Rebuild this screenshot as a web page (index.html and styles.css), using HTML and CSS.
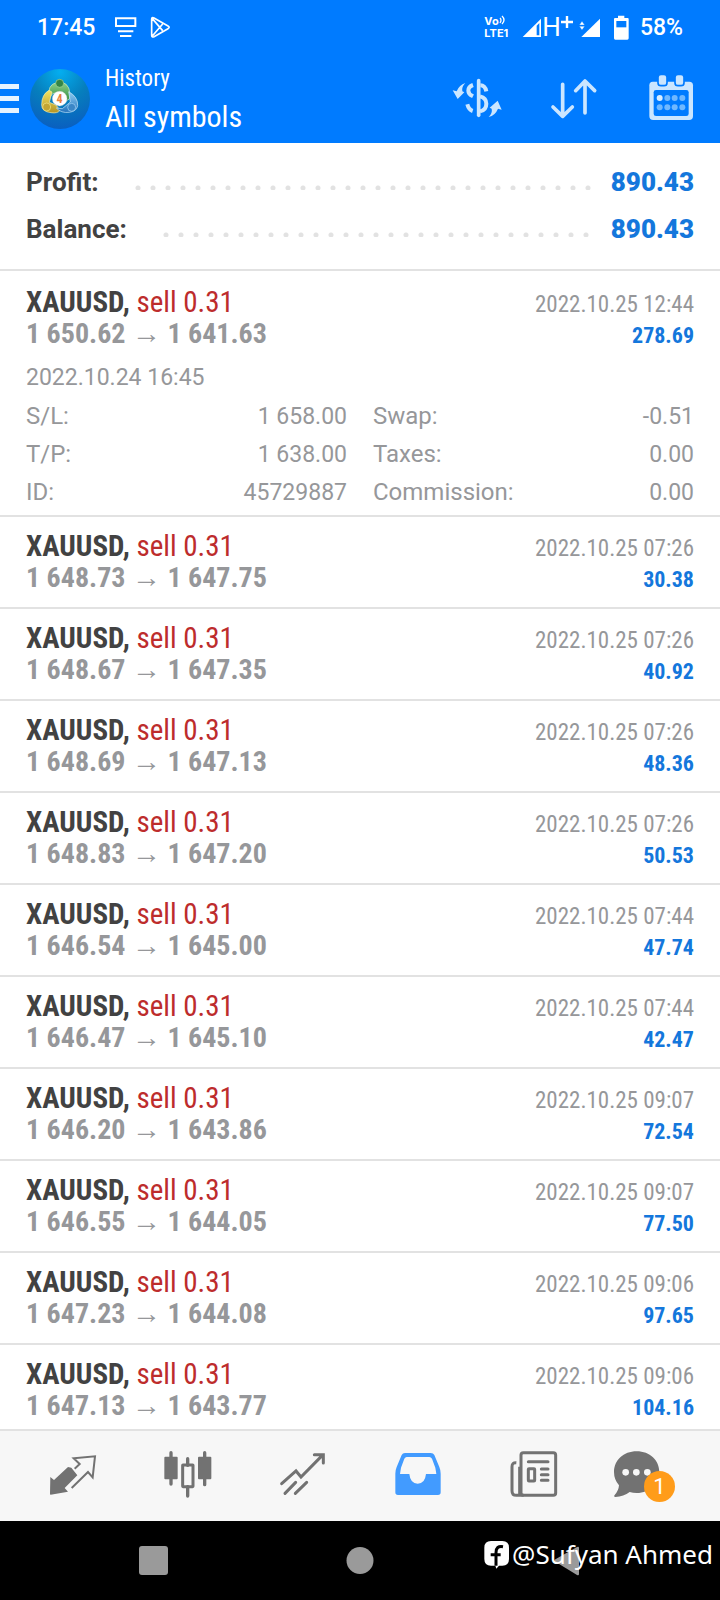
FILE: index.html
```html
<!DOCTYPE html>
<html lang="en">
<head>
<meta charset="utf-8">
<meta name="viewport" content="width=device-width, initial-scale=1">
<title>History - All symbols</title>
<link rel="stylesheet" href="styles.css">
</head>
<body>
<div class="screen">
  <header class="top">
    <div class="status">
      <span class="clock">17:45</span>
      <svg class="status-note" viewBox="342 45 69 69" aria-hidden="true"><path d="M348 52h58v23h-58z" fill="none" stroke="#fff" stroke-width="6"/><path d="M354 91h46M360 105h34" stroke="#fff" stroke-width="6"/></svg>
      <svg class="status-note" viewBox="447 45 69 69" aria-hidden="true"><path d="M455 55q0-7 7-4l42 24q7 4 0 8l-42 24q-7 3-7-4zM457 53l31 36M457 105l31-36M455 79" fill="none" stroke="#fff" stroke-width="5" stroke-linejoin="round"/></svg>
      <span class="spacer"></span>
      <span class="volte"><span>Vo<svg viewBox="0 0 8 10" aria-hidden="true"><path d="M1 3q2 2 0 5M3 1q4 4 0 8" fill="none" stroke="#fff" stroke-width="1.3"/></svg></span><span>LTE1</span></span>
      <svg class="signal-one" viewBox="255 45 60 69" aria-hidden="true"><path d="M257 108L312 53v55z" fill="#fff"/><path d="M299 74l8-8v37h-8z" fill="#007bff"/></svg>
      <span class="hplus">H<svg viewBox="0 0 13 13" aria-hidden="true"><path d="M6.500 0v13M0 6.500h13" stroke="#fff" stroke-width="2.600"/></svg></span>
      <svg class="signal-two" viewBox="420 45 66 69" aria-hidden="true"><path d="M427 108L483 53v55z" fill="#fff"/><path d="M421 72l8-11 8 11zM421 76l8 11 8-11z" fill="#fff" stroke="#007bff" stroke-width="1"/></svg>
      <svg class="battery" viewBox="520 40 48 75" aria-hidden="true"><path d="M535 42h19v7h10q3 0 3 3v58q0 4-4 4h-36q-4 0-4-4V52q0-3 3-3h9z" fill="#fff"/><path d="M530 58h30v19h-30z" fill="#007bff"/></svg>
      <span class="percent">58%</span>
    </div>
    <div class="appbar">
      <button class="menu" aria-label="Menu"><span></span><span></span><span></span></button>
      <svg class="logo" viewBox="91 204 180 180" aria-hidden="true">
        <defs>
          <radialGradient id="sky" cx=".5" cy=".05" r=".95"><stop offset="0" stop-color="#04aef0"/><stop offset=".5" stop-color="#067fbd"/><stop offset="1" stop-color="#0a5fc0"/></radialGradient>
          <linearGradient id="green" x1="0" y1="0" x2="0" y2="1"><stop offset="0" stop-color="#8ed08a"/><stop offset="1" stop-color="#2c8a3c"/></linearGradient>
          <linearGradient id="gold" x1="0" y1="0" x2="0" y2="1"><stop offset="0" stop-color="#f3e463"/><stop offset="1" stop-color="#b59424"/></linearGradient>
          <linearGradient id="blue" x1="0" y1="0" x2="0" y2="1"><stop offset="0" stop-color="#8fcdf2"/><stop offset="1" stop-color="#2373bd"/></linearGradient>
        </defs>
        <circle cx="181" cy="294" r="90" fill="url(#sky)"/>
        <path d="M148 292q-6-43 24-47 35-7 39 33l-2 16-14 8-22-28-14 4z" fill="url(#green)" stroke="#d4efc6" stroke-width="2"/>
        <path d="M148 268q-22 12-22 44 0 20 28 23 20 3 27-7l-12-16-20-8 8-31z" fill="url(#gold)" stroke="#f4efad" stroke-width="2"/>
        <path d="M207 272q28 15 27 42-3 17-25 20-25 3-39-13l18 2 24-20z" fill="url(#blue)" stroke="#cbe9fb" stroke-width="2"/>
        <circle cx="180" cy="247" r="12" fill="#338547" stroke="#a9d99d" stroke-width="2"/>
        <circle cx="141" cy="318" r="12" fill="#c2a534" stroke="#f4e889" stroke-width="2"/>
        <circle cx="216" cy="319" r="12" fill="#3b86c6" stroke="#a8dafa" stroke-width="2"/>
        <circle cx="180" cy="293" r="22" fill="#fff" stroke="#d5d5d5"/>
        <text class="logo-digit" x="180" y="306" text-anchor="middle">4</text>
      </svg>
      <h1 class="titles"><span class="section">History</span><span class="symbols">All symbols</span></h1>
      <div class="actions">
        <button aria-label="Currency"><svg viewBox="36 216 150 150"><path d="M116 239v104" stroke="#cbe6ff" stroke-width="11" stroke-linecap="round"/><path d="M99 252q-14 5-14 17 0 10 14 17M121 253q14 0 18 18M120 286q19 5 19 22 0 19-19 23M98 330q-12-4-16-20" fill="none" stroke="#cbe6ff" stroke-width="12"/><path d="M76 246q-12 12-9 25l6 3-20 20-15-26 12 3q8-20 26-25zM146 348q12-12 9-25l-6-3 24-21 12 27-11-3q-8 20-28 25z" fill="#cbe6ff"/></svg></button>
        <button aria-label="Sort"><svg viewBox="327 216 150 150"><path d="M368 250v95M339 318l29 28 29-28M435 336v-95M407 269l28-29 29 29" fill="none" stroke="#cbe6ff" stroke-width="11" stroke-linecap="round" stroke-linejoin="round"/></svg></button>
        <button aria-label="Calendar"><svg viewBox="618 216 150 150"><path d="M638 242h110q11 0 11 11v92q0 12-12 12H640q-12 0-12-12v-92q0-11 10-11z" fill="#cbe6ff"/><rect x="641" y="267" width="105" height="78" rx="7" fill="#007bff"/><g fill="#cbe6ff" stroke="#007bff" stroke-width="5"><rect x="654" y="220" width="27" height="34" rx="9"/><rect x="705" y="220" width="27" height="34" rx="9"/></g><g fill="#70b8ff"><circle cx="659" cy="291" r="9" fill="#d9edff"/><circle cx="682" cy="291" r="9"/><circle cx="704" cy="291" r="9"/><circle cx="727" cy="291" r="9"/><circle cx="659" cy="319" r="9"/><circle cx="682" cy="319" r="9"/><circle cx="704" cy="319" r="9"/><circle cx="727" cy="319" r="9"/></g></svg></button>
      </div>
    </div>
  </header>

  <section class="summary">
    <div class="total"><span>Profit:</span><i class="leader"></i><b>890.43</b></div>
    <div class="total"><span>Balance:</span><i class="leader"></i><b>890.43</b></div>
  </section>

  <main class="deals">
    <article class="deal open">
      <div class="line"><span class="pair">XAUUSD, <em>sell 0.31</em></span><time>2022.10.25 12:44</time></div>
      <div class="line"><span class="price">1 650.62 <i>→</i> 1 641.63</span><b>278.69</b></div>
      <div class="details">
        <p>2022.10.24 16:45</p>
        <dl>
          <div><dt>S/L:</dt><dd>1 658.00</dd></div><div><dt>Swap:</dt><dd>-0.51</dd></div>
          <div><dt>T/P:</dt><dd>1 638.00</dd></div><div><dt>Taxes:</dt><dd>0.00</dd></div>
          <div><dt>ID:</dt><dd>45729887</dd></div><div><dt>Commission:</dt><dd>0.00</dd></div>
        </dl>
      </div>
    </article>
    <article class="deal">
      <div class="line"><span class="pair">XAUUSD, <em>sell 0.31</em></span><time>2022.10.25 07:26</time></div>
      <div class="line"><span class="price">1 648.73 <i>→</i> 1 647.75</span><b>30.38</b></div>
    </article>
    <article class="deal">
      <div class="line"><span class="pair">XAUUSD, <em>sell 0.31</em></span><time>2022.10.25 07:26</time></div>
      <div class="line"><span class="price">1 648.67 <i>→</i> 1 647.35</span><b>40.92</b></div>
    </article>
    <article class="deal">
      <div class="line"><span class="pair">XAUUSD, <em>sell 0.31</em></span><time>2022.10.25 07:26</time></div>
      <div class="line"><span class="price">1 648.69 <i>→</i> 1 647.13</span><b>48.36</b></div>
    </article>
    <article class="deal">
      <div class="line"><span class="pair">XAUUSD, <em>sell 0.31</em></span><time>2022.10.25 07:26</time></div>
      <div class="line"><span class="price">1 648.83 <i>→</i> 1 647.20</span><b>50.53</b></div>
    </article>
    <article class="deal">
      <div class="line"><span class="pair">XAUUSD, <em>sell 0.31</em></span><time>2022.10.25 07:44</time></div>
      <div class="line"><span class="price">1 646.54 <i>→</i> 1 645.00</span><b>47.74</b></div>
    </article>
    <article class="deal">
      <div class="line"><span class="pair">XAUUSD, <em>sell 0.31</em></span><time>2022.10.25 07:44</time></div>
      <div class="line"><span class="price">1 646.47 <i>→</i> 1 645.10</span><b>42.47</b></div>
    </article>
    <article class="deal">
      <div class="line"><span class="pair">XAUUSD, <em>sell 0.31</em></span><time>2022.10.25 09:07</time></div>
      <div class="line"><span class="price">1 646.20 <i>→</i> 1 643.86</span><b>72.54</b></div>
    </article>
    <article class="deal">
      <div class="line"><span class="pair">XAUUSD, <em>sell 0.31</em></span><time>2022.10.25 09:07</time></div>
      <div class="line"><span class="price">1 646.55 <i>→</i> 1 644.05</span><b>77.50</b></div>
    </article>
    <article class="deal">
      <div class="line"><span class="pair">XAUUSD, <em>sell 0.31</em></span><time>2022.10.25 09:06</time></div>
      <div class="line"><span class="price">1 647.23 <i>→</i> 1 644.08</span><b>97.65</b></div>
    </article>
    <article class="deal">
      <div class="line"><span class="pair">XAUUSD, <em>sell 0.31</em></span><time>2022.10.25 09:06</time></div>
      <div class="line"><span class="price">1 647.13 <i>→</i> 1 643.77</span><b>104.16</b></div>
    </article>
  </main>

  <nav class="tabs">
    <button aria-label="Quotes"><svg viewBox="110 60 216 216"><path d="M150 171l11 9 42-39 10 2 18 23-38 38 10 11-52 9q-2 0-2-2z" fill="#727272"/><path d="M223 146l15-14-18-17 64-6-7 63-14-16-49 48" fill="none" stroke="#727272" stroke-width="6"/></svg></button>
    <button aria-label="Charts"><svg viewBox="455 60 216 216"><path d="M512 98v94M613 98v96M562 116v20M562 200v28" stroke="#727272" stroke-width="10" stroke-linecap="round"/><rect x="492" y="110" width="40" height="68" rx="3" fill="#727272"/><rect x="593" y="110" width="40" height="68" rx="3" fill="#727272"/><rect x="547" y="135" width="31" height="65" rx="1" fill="none" stroke="#727272" stroke-width="9"/></svg></button>
    <button aria-label="Trade"><svg viewBox="800 60 216 216"><path d="M844 191l43-38 15 18 64-65M942 104h27v25M854 220l32-33M885 220l34-33" fill="none" stroke="#727272" stroke-width="9" stroke-linecap="round"/></svg></button>
    <button aria-label="History" aria-current="page"><svg viewBox="65 60 216 216"><path d="M134 99h77q8 0 11 6l15 36q4 9 4 20v56q0 8-8 8H113q-8 0-8-8v-56q0-11 4-20l15-36q3-6 10-6z" fill="#429bff"/><path d="M139 111h68q5 0 8 5l10 27 3 19h-31q-3 29-25 29t-25-29h-28l3-19 10-27q3-5 7-5z" fill="#f7f7f7"/></svg></button>
    <button aria-label="News"><svg viewBox="410 60 216 216"><rect x="482" y="98" width="104" height="128" rx="7" fill="none" stroke="#727272" stroke-width="9"/><path d="M468 128q-13-1-13 12v72q0 14 13 14h22M478 140v88" fill="none" stroke="#727272" stroke-width="9"/><path d="M504 125h59M543 147h20M543 164h20M543 181h20" stroke="#727272" stroke-width="9" stroke-linecap="round"/><rect x="504" y="146" width="19" height="37" rx="2" fill="none" stroke="#727272" stroke-width="9"/></svg></button>
    <button class="chat" aria-label="Messages"><svg viewBox="755 60 216 216"><path d="M829 94c40 0 68 27 68 62s-28 63-68 63q-11 0-21-3-18 14-43 15-6-1-2-6 12-13 13-29-15-17-15-40c0-35 28-62 68-62z" fill="#727272"/><g fill="#f7f7f7"><circle cx="796" cy="157" r="10"/><circle cx="828" cy="157" r="10"/><circle cx="861" cy="157" r="10"/></g></svg><span class="badge">1</span></button>
  </nav>

  <footer class="system">
    <button aria-label="Recent apps"><svg viewBox="0 0 30 30"><rect x="1" y="0" width="29" height="29" rx="3" fill="#9a9a9a"/></svg></button>
    <button aria-label="Home"><svg viewBox="0 0 30 30"><circle cx="15" cy="14.500" r="13.500" fill="#9a9a9a"/></svg></button>
    <button aria-label="Back"><svg viewBox="0 0 30 30"><path d="M3 15.500Q2 14.500 3 13.500L25 1q2-1 2 1v26q0 2-2 1z" fill="#9a9a9a"/></svg></button>
    <div class="watermark"><svg viewBox="364 366 75 87" aria-hidden="true"><path d="M385 369h34q20 0 20 20v34q0 20-20 20h-10l-8 9-3-9h-13q-20 0-20-20v-34q0-20 20-20z" fill="#fff"/><path d="M421 386q-21-4-21 18v39M384 410h30" fill="none" stroke="#000" stroke-width="9"/></svg><span>@Sufyan Ahmed</span></div>
  </footer>
</div>
</body>
</html>
```
FILE: styles.css
```css
* { box-sizing: border-box; }

body {
  margin: 0;
  background: #fff;
  color: #424242;
  font-family: Roboto, "Liberation Sans", sans-serif;
  font-size: 24px;
}

button {
  padding: 0;
  border: 0;
  background: none;
  font: inherit;
  color: inherit;
}

svg { display: block; }

.screen {
  display: flex;
  flex-direction: column;
  height: 100vh;
}

.top {
  flex: none;
  background: #007bff;
  color: #fff;
}

.status {
  display: flex;
  align-items: center;
  height: 54px;
  padding: 0 37px;
  font-size: 23px;
  font-weight: 500;
}

.clock { margin-right: 19px; }

.status-note {
  width: 23px;
  height: 23px;
  margin-right: 12px;
}

.spacer { flex: 1; }

.volte {
  margin-right: 14px;
  font-family: Inter, sans-serif;
  font-size: 11px;
  font-weight: 700;
  line-height: 12px;
}

.volte > span { display: flex; }
.volte svg { width: 8px; height: 10px; }

.signal-one { width: 20px; height: 23px; }

.hplus {
  display: flex;
  align-items: flex-start;
  margin-right: 6px;
  font-size: 26px;
  font-weight: 400;
  line-height: 26px;
}

.hplus svg { width: 12px; height: 12px; margin-top: 2px; }

.signal-two { width: 22px; height: 23px; margin-right: 12px; }
.battery { width: 16px; height: 25px; margin-right: 11px; }

.appbar {
  display: flex;
  align-items: center;
  height: 89px;
  padding-right: 24px;
}

.menu {
  display: grid;
  gap: 7px;
  width: 19px;
  margin-right: 11px;
}

.menu span { height: 5px; background: #e6f3ff; }

.logo { flex: none; width: 60px; height: 60px; margin-right: 15px; }

.logo-digit { fill: #e8803c; font: 700 36px "Roboto Condensed", sans-serif; }

.titles {
  flex: 1;
  margin: 0;
  padding-top: 2px;
  font-family: "Roboto Condensed", "Liberation Sans Narrow", sans-serif;
  font-weight: 400;
}

.titles span { display: block; }
.section { font-size: 23px; line-height: 34px; }
.symbols { font-size: 30px; line-height: 42px; }

.actions { display: flex; gap: 47px; padding-bottom: 2px; }
.actions svg { width: 50px; height: 50px; }

.summary {
  flex: none;
  padding: 16px 26px;
  border-bottom: 2px solid #e2e2e2;
  font-size: 26px;
  font-weight: 700;
  line-height: 47px;
}

.total { display: flex; align-items: center; }
.total b { color: #1477dc; }

.leader {
  flex: 1;
  height: 5px;
  margin: 10px 20px 0 36px;
  background: radial-gradient(circle at 3px 3px, #e2e2e2 2px, transparent 3px) 0 0 / 15px 5px repeat-x;
}

.deals { flex: 1; min-height: 0; overflow: hidden; }

.deal {
  padding: 13px 26px;
  border-bottom: 2px solid #e2e2e2;
  font-family: "Roboto Condensed", "Liberation Sans Narrow", sans-serif;
}

.deal.open { padding: 15px 26px 4px; }

.line {
  display: flex;
  align-items: baseline;
  justify-content: space-between;
  height: 32px;
  line-height: 32px;
}

.pair { font-size: 29px; font-weight: 700; }
.pair em { color: #bd2c2c; font-style: normal; font-weight: 400; }
.price { color: #96979a; font-size: 28px; font-weight: 700; }
.price i { font: 400 29px "Liberation Sans", sans-serif; line-height: 20px; }
.line time { color: #96979a; font-size: 23px; }
.line b { color: #1477dc; font-size: 22px; font-weight: 700; }

.details {
  margin-top: 9px;
  color: #96979a;
  font-family: Roboto, sans-serif;
  line-height: 38px;
}

.details p, .details dl, .details dd { margin: 0; }
.details p, .details dd { font-size: 23px; }

.details dl {
  display: grid;
  grid-template-columns: 1fr 1fr;
  column-gap: 26px;
}

.details dl div {
  display: flex;
  align-items: baseline;
  justify-content: space-between;
  height: 38px;
}

.tabs {
  flex: none;
  display: grid;
  grid-template-columns: repeat(6, 1fr);
  height: 92px;
  padding: 0 15px;
  border-top: 2px solid #e2e2e2;
  background: #f7f7f7;
}

.tabs button { display: grid; place-items: center; }
.tabs svg { width: 72px; height: 72px; }

.chat { position: relative; }

.badge {
  position: absolute;
  top: 40px;
  right: 30px;
  width: 31px;
  height: 31px;
  border-radius: 50%;
  background: #ff9c1a;
  color: #fff;
  font-size: 22px;
  line-height: 31px;
  text-align: center;
}

.system {
  position: relative;
  flex: none;
  display: grid;
  grid-template-columns: repeat(3, 1fr);
  height: 79px;
  padding: 0 50px;
  background: #000;
}

.system button { display: grid; place-items: center; }
.system button svg { width: 30px; height: 30px; }

.watermark {
  position: absolute;
  top: 15px;
  right: 7px;
  display: flex;
  align-items: center;
  gap: 3px;
  color: #fff;
  font-family: "Noto Sans", sans-serif;
  font-size: 26px;
  line-height: 36px;
}

.watermark svg { width: 25px; height: 29px; }
```
